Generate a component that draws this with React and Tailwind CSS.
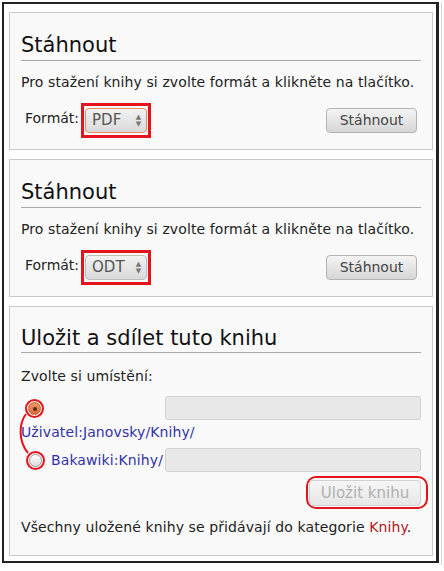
import { useState } from 'react';

const font = { fontFamily: '"DejaVu Sans", Verdana, sans-serif' };

function FormatSelect({ value, focused }) {
    return (
        <div className='border-[3px] border-[#e3141c] px-[1px] py-[2px]'>
            <div className={'flex items-center justify-between w-[62px] h-[25px] rounded-[4px] border pl-[6px] pr-[5px] bg-gradient-to-b from-[#f2f2f2] to-[#d9d9d9] ' + (focused ? 'border-[#e6895c]' : 'border-[#bdbdbd]')}>
                <span className='text-[15px] text-[#555]'>{value}</span>
                <span className='flex flex-col items-center leading-none text-[7px] text-[#777]'>
                    <span>▲</span>
                    <span>▼</span>
                </span>
            </div>
        </div>
    );
}

function DownloadPanel({ format, focused }) {
    return (
        <section className='border border-[#c9c9c9] bg-[#f9f9f9] px-[11px] pt-[19px] h-[138px]'>
            <h2 className='text-[21px] leading-[26px] text-[#111] border-b border-[#aaaaaa] pb-[2px]'>Stáhnout</h2>
            <p className='mt-[11px] text-[14px] tracking-[0.1px] leading-[20px] text-[#222]'>
                Pro stažení knihy si zvolte formát a klikněte na tlačítko.
            </p>
            <div className='mt-[11px] flex items-center justify-between pl-[4px] pr-[4px]'>
                <div className='flex items-center'>
                    <span className='text-[14px] text-[#222] -mt-[4px] mr-[2px]'>Formát:</span>
                    <FormatSelect value={format} focused={focused} />
                </div>
                <button className='w-[91px] h-[25px] rounded-[4px] border border-[#b3b3b3] bg-gradient-to-b from-[#f4f4f4] to-[#d6d6d6] text-[14px] text-[#444]'>
                    Stáhnout
                </button>
            </div>
        </section>
    );
}

function Radio({ checked }) {
    return (
        <span className='inline-flex rounded-full border-2 border-[#e3141c] p-[1px]'>
            {checked ? (
                <span className='w-[13px] h-[13px] rounded-full border border-[#c4602f] bg-gradient-to-b from-[#f39a63] to-[#d9693a] flex items-center justify-center'>
                    <span className='w-[4px] h-[4px] rounded-full bg-[#5b2a17]'></span>
                </span>
            ) : (
                <span className='w-[13px] h-[13px] rounded-full border border-[#9a9a9a] bg-gradient-to-b from-[#ffffff] to-[#dcdcdc]'></span>
            )}
        </span>
    );
}

export default function App() {
    const [target] = useState('user');

    return (
        <div className='flex bg-white w-[444px] h-[571px] pt-[2px] pl-[2px]' style={font}>
            <div className='w-[437px] h-[561px] border-2 border-r-[3px] border-[#222] bg-white pt-[8px] pl-[5px] pr-[3px] flex flex-col gap-[9px]'>
                <DownloadPanel format='PDF' focused />
                <DownloadPanel format='ODT' />

                <section className='relative border border-[#c9c9c9] bg-[#f9f9f9] px-[11px] pt-[18px] h-[250px]'>
                    <h2 className='text-[21px] leading-[26px] text-[#111] border-b border-[#aaaaaa] pb-[1px]'>Uložit a sdílet tuto knihu</h2>
                    <p className='mt-[13px] text-[14px] tracking-[0.1px] leading-[20px] text-[#222]'>Zvolte si umístění:</p>

                    <div className='mt-[10px] flex items-center'>
                        <div className='w-[144px] pl-[4px] -mt-[4px]'>
                            <Radio checked={target === 'user'} />
                        </div>
                        <div className='flex-1 h-[24px] rounded-[3px] border border-[#d2d2d2] bg-[#e8e8e8]'></div>
                    </div>
                    <div className='mt-[2px] text-[14px] tracking-[0.1px] leading-[20px] text-[#3333a6]'>Uživatel:Janovsky/Knihy/</div>

                    <div className='mt-[6px] flex items-center'>
                        <div className='w-[144px] pl-[5px] flex items-center'>
                            <Radio checked={target === 'wiki'} />
                            <span className='ml-[6px] text-[14px] tracking-[0.1px] text-[#3333a6]'>Bakawiki:Knihy/</span>
                        </div>
                        <div className='flex-1 h-[24px] rounded-[3px] border border-[#d2d2d2] bg-[#e8e8e8]'></div>
                    </div>

                    <div className='mt-[4px] flex justify-end -mr-[7px]'>
                        <div className='rounded-[10px] border-2 border-[#e3141c] pl-[1px] pr-[5px] pt-[2px] pb-[1px]'>
                            <button disabled className='w-[112px] h-[26px] rounded-[4px] border border-[#d0d0d0] bg-gradient-to-b from-[#f6f6f6] to-[#e6e6e6] text-[15px] text-[#b0b0b0]'>
                                Uložit knihu
                            </button>
                        </div>
                    </div>

                    <p className='mt-[8px] text-[14px] tracking-[0.1px] leading-[20px] text-[#222]'>
                        Všechny uložené knihy se přidávají do kategorie <span className='text-[#b3171b]'>Knihy</span>.
                    </p>

                    <svg className='absolute left-0 top-0 pointer-events-none' width='60' height='170'>
                        <path d='M 16 107 C 9 116, 8 134, 18 146' fill='none' stroke='#e3141c' strokeWidth='2' />
                    </svg>
                </section>
            </div>
            <div className='ml-[2px] w-px h-[563px] bg-[#d6d6d6]'></div>
        </div>
    );
}
